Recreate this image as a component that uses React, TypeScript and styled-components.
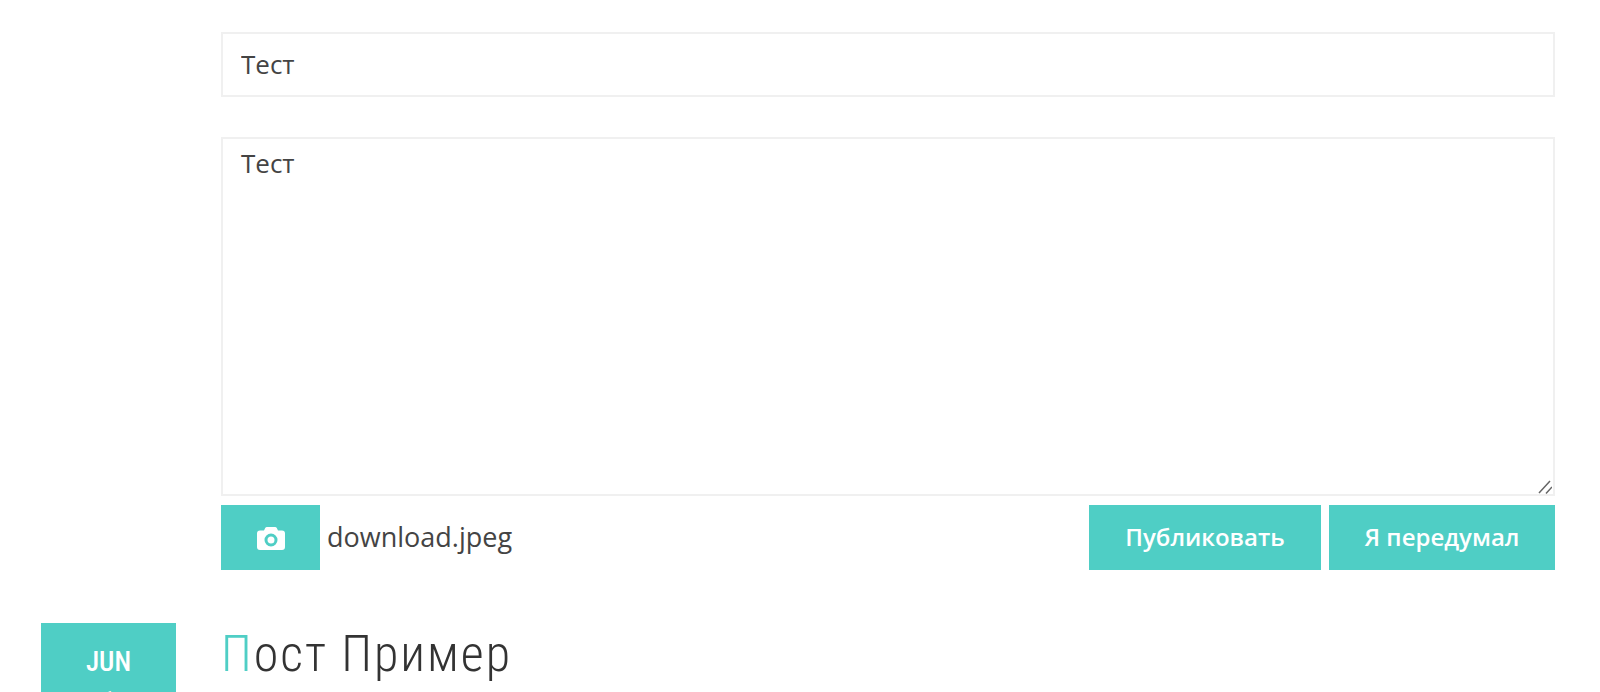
import React from 'react'
import styled, {createGlobalStyle} from 'styled-components'

const GlobalStyle = createGlobalStyle`
  html, body {
    margin: 0;
    height: 692px;
    overflow: hidden;
    background: #fff;
  }
  body {
    font-family: "Open Sans", sans-serif;
    color: #444;
  }
`;

const Page = styled.div`
  display: flex;
  flex-direction: column;
  padding: 32px 45px 0 41px;
`;

const Form = styled.form`
  display: flex;
  flex-direction: column;
  margin-left: 180px;
`;

const TitleInput = styled.input`
  box-sizing: border-box;
  height: 65px;
  margin-bottom: 40px;
  padding: 0 18px 1px;
  border: 2px solid #f0f0f0;
  outline: none;
  font: 400 26px "Open Sans", sans-serif;
  color: #444;
`;

const BodyWrap = styled.div`
  position: relative;
  height: 359px;
`;

const BodyInput = styled.textarea`
  box-sizing: border-box;
  display: block;
  width: 100%;
  height: 100%;
  padding: 8px 18px;
  border: 2px solid #f0f0f0;
  outline: none;
  font: 400 26px/33px "Open Sans", sans-serif;
  color: #444;
  resize: none;
`;

const Grip = styled.svg`
  position: absolute;
  right: 3px;
  bottom: 2px;
`;

const Actions = styled.div`
  display: flex;
  align-items: center;
  margin-top: 9px;
`;

const UploadButton = styled.button`
  display: flex;
  align-items: center;
  justify-content: center;
  width: 99px;
  height: 65px;
  padding: 0;
  border: none;
  background: #4fcec5;
`;

const FileName = styled.span`
  margin-left: 7px;
  padding-bottom: 2px;
  font-size: 27px;
  color: #444;
`;

const Buttons = styled.div`
  display: flex;
  gap: 8px;
  margin-left: auto;
`;

const Button = styled.button<{$width: number}>`
  width: ${p => p.$width}px;
  height: 65px;
  padding: 0 0 2px;
  border: none;
  background: #4fcec5;
  color: #fff;
  font: 600 24px "Open Sans", sans-serif;
`;

const Post = styled.article`
  display: flex;
  margin-top: 53px;
`;

const DateBox = styled.div`
  display: flex;
  flex-direction: column;
  align-items: center;
  flex: none;
  width: 135px;
  height: 140px;
  padding-top: 18px;
  box-sizing: border-box;
  background: #4fcec5;
  color: #fff;
  font: 500 27px/42px Roboto, sans-serif;
  font-stretch: 75%;
`;

const DayNumber = styled.span`
  margin-top: -2px;
`;

const PostTitle = styled.h2`
  margin: 2px 0 0 45px;
  font: 300 50px/58px Roboto, sans-serif;
  font-stretch: 75%;
  letter-spacing: 2px;
  color: #333;
  &::first-letter {
    color: #4fcec5;
  }
`;

const CameraIcon = () => (
    <svg width="28" height="24" viewBox="0 0 28 24">
        <path
            fill="#fff"
            fillRule="evenodd"
            d="M10 1h8a2 2 0 0 1 1.800 1.100L21 4.500h4a3 3 0 0 1 3 3V21a3 3 0 0 1-3 3H3a3 3 0 0 1-3-3V7.500a3 3 0 0 1 3-3h4l1.200-2.400A2 2 0 0 1 10 1zM14 7.500a6.500 6.500 0 1 0 0 13 6.500 6.500 0 0 0 0-13zM14 10.500a3.500 3.500 0 1 1 0 7 3.500 3.500 0 0 1 0-7z"
        />
    </svg>
)

const ResizeGrip = () => (
    <Grip width="14" height="14" viewBox="0 0 14 14">
        <path stroke="#666" strokeWidth="1.500" fill="none" d="M1 13L12 1M8 13.500L14 7"/>
    </Grip>
)

export default function App() {
    return (
        <Page>
            <GlobalStyle/>
            <Form>
                <TitleInput defaultValue="Тест"/>
                <BodyWrap>
                    <BodyInput defaultValue="Тест"/>
                    <ResizeGrip/>
                </BodyWrap>
                <Actions>
                    <UploadButton type="button"><CameraIcon/></UploadButton>
                    <FileName>download.jpeg</FileName>
                    <Buttons>
                        <Button type="button" $width={232}>Публиковать</Button>
                        <Button type="button" $width={226}>Я передумал</Button>
                    </Buttons>
                </Actions>
            </Form>
            <Post>
                <DateBox>
                    <span>JUN</span>
                    <DayNumber>1</DayNumber>
                </DateBox>
                <PostTitle>Пост Пример</PostTitle>
            </Post>
        </Page>
    )
}
